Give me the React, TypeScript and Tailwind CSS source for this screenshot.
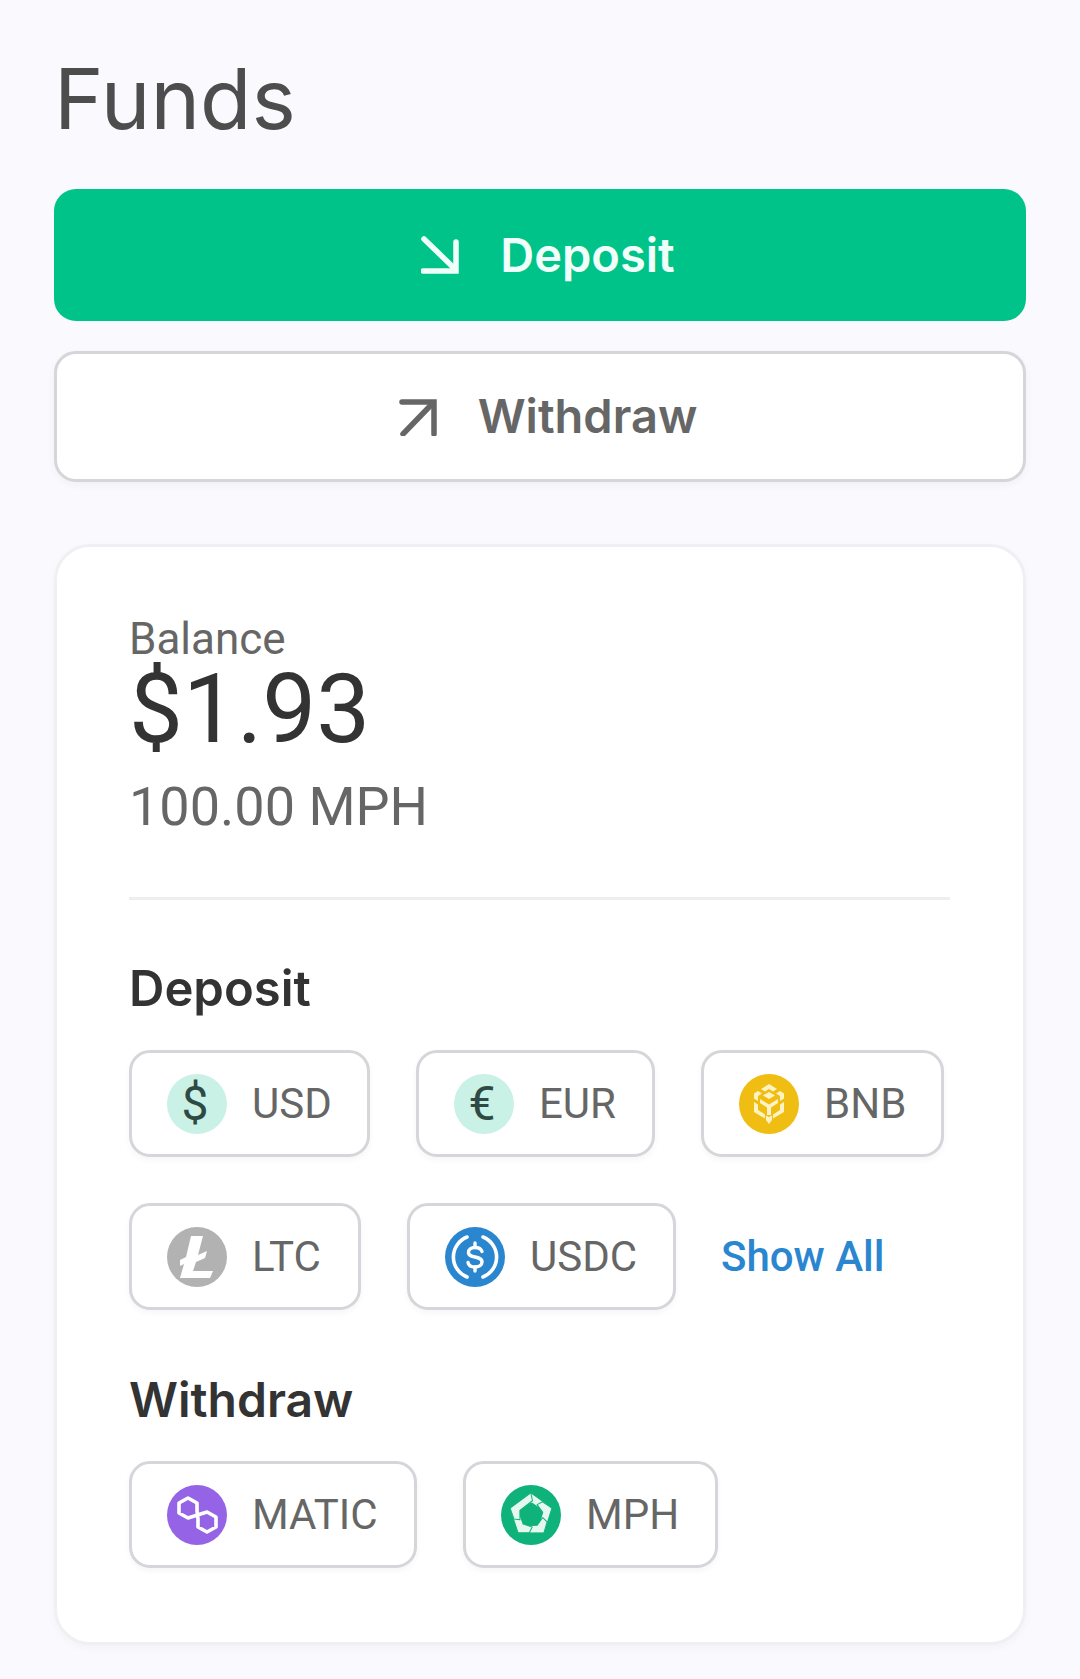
import type { ReactNode } from "react"

function ArrowDownRight() {
  return (
    <svg width="38" height="38" viewBox="0 0 38 38" fill="none" stroke="currentColor" strokeWidth="5.5">
      <path d="M3 3 L34 33" strokeLinecap="round" />
      <path d="M35 6 V35 H2" strokeLinecap="round" />
    </svg>
  )
}

function ArrowUpRight() {
  return (
    <svg width="38" height="38" viewBox="0 0 38 38" fill="none" stroke="currentColor" strokeWidth="5.5">
      <path d="M3 4 H35 V36" strokeLinecap="round" />
      <path d="M33 6 L4 36" strokeLinecap="round" />
    </svg>
  )
}

function CoinDisc({ className, children }: { className: string; children: ReactNode }) {
  return (
    <span className={`flex h-[60px] w-[60px] shrink-0 items-center justify-center rounded-full ${className}`}>
      {children}
    </span>
  )
}

function BnbIcon() {
  return (
    <svg width="60" height="60" viewBox="0 0 60 60" fill="#fff3c4">
      <path d="M30 10 L38 15 L34 17.5 L30 15 L26 17.5 L22 15 Z" />
      <path d="M19 17 L23 19.5 L19 22 V27 L15 24.5 V19.5 Z" />
      <path d="M41 17 L37 19.5 L41 22 V27 L45 24.5 V19.5 Z" />
      <path d="M30 18 L36 21.5 L30 25 L24 21.5 Z" />
      <path d="M21 25 L30 30.5 L39 25 V29 L32 33.5 V41 L28 41 V33.5 L21 29 Z" />
      <path d="M15 28 L19 30.5 V36 L26 40.5 V44.5 L15 38 Z" />
      <path d="M45 28 L41 30.5 V36 L34 40.5 V44.5 L45 38 Z" />
      <path d="M30 43 L33 41.5 V46 L30 50 L27 46 V41.5 Z" />
    </svg>
  )
}

function LtcIcon() {
  return (
    <svg width="34" height="44" viewBox="0 0 34 44">
      <path d="M11 1 H23 L18 20 L27 16 L25 23 L16 27 L13 36 H33 L30 43 H0 L4 29 L-2 32 L0 25 L6 22 Z" fill="#fff" />
    </svg>
  )
}

function UsdcIcon() {
  return (
    <svg width="50" height="50" viewBox="0 0 50 50" fill="none" stroke="#fff" strokeWidth="3.6" strokeLinecap="round">
      <path d="M17 5 A21.5 21.5 0 0 0 17 45" />
      <path d="M33 5 A21.5 21.5 0 0 1 33 45" />
      <path d="M32 19.5 C31 16.5 28.5 15.5 25 15.5 C21 15.5 18.5 17.5 18.5 20.5 C18.5 27 32 23 32 30 C32 33 29 35 25 35 C21 35 18.5 33.5 18 30.5" strokeWidth="3.4" />
      <path d="M25 11 V15 M25 35 V39" strokeWidth="3.4" />
    </svg>
  )
}

function MaticIcon() {
  return (
    <svg width="60" height="60" viewBox="0 0 60 60" fill="none" stroke="#fff" strokeWidth="3.6" strokeLinejoin="round">
      <path d="M21 33 L12 28 V18 L21 13 L30 18 V26 L31 34 V42 L40 47 L49 42 V32 L40 27 L21 33 Z" />
    </svg>
  )
}

function MphIcon() {
  return (
    <svg width="60" height="60" viewBox="0 0 60 60">
      {[0, 72, 144, 216, 288].map((angle) => (
        <g key={angle} transform={`rotate(${angle} 30 30)`}>
          <path d="M30 8 L51 23 L44 27 L31 18 L22 21 L21 15 Z" fill="#e4f8ef" stroke="#10b27c" strokeWidth="1" strokeLinejoin="round" />
        </g>
      ))}
    </svg>
  )
}

function Chip({ label, icon, width }: { label: string; icon: ReactNode; width: string }) {
  return (
    <div className={`flex h-[107px] items-center gap-[25px] rounded-[21px] border-[3px] border-[#d5d5da] bg-white pl-[35px] shadow-[0_3px_6px_rgba(0,0,0,0.04)] ${width}`}>
      {icon}
      <span className="text-[42px] leading-none text-[#666666]">{label}</span>
    </div>
  )
}

export default function App() {
  return (
    <div className="min-h-[1679px] bg-[#f9f9fe] px-[54px] pt-[46px] font-['Roboto',sans-serif]">
      <h1 className="font-['Inter',sans-serif] text-[84px] leading-[105px] text-[#4d4d4d]">Funds</h1>

      <div className="mt-[38px] flex h-[132px] items-center justify-center gap-[41px] rounded-[22px] bg-[#00c389] pl-[16px] font-['Inter',sans-serif] text-[47px] font-semibold text-[#f0fff9]">
        <ArrowDownRight />
        <span>Deposit</span>
      </div>

      <div className="mt-[30px] flex h-[131px] items-center justify-center gap-[41px] rounded-[22px] border-[3px] border-[#d5d5da] bg-white pl-[16px] font-['Inter',sans-serif] text-[47px] font-semibold text-[#666666] shadow-[0_3px_8px_rgba(0,0,0,0.04)]">
        <ArrowUpRight />
        <span>Withdraw</span>
      </div>

      <section className="mt-[62px] h-[1101px] rounded-[36px] border-[3px] border-[#f0f0f4] bg-white px-[72px] pt-[70px] shadow-[0_3px_8px_rgba(0,0,0,0.03)]">
        <p className="text-[44px] leading-[44px] text-[#666666]">Balance</p>
        <p className="text-[96px] leading-[97px] text-[#333333]">$1.93</p>
        <p className="mt-[19px] text-[54px] leading-[60px] text-[#666666]">100.00 MPH</p>

        <div className="mt-[60px] h-[3px] w-[821px] bg-[#eeeeee]" />

        <h2 className="mt-[61px] font-['Inter',sans-serif] text-[49px] font-semibold leading-[56px] text-[#333333]">Deposit</h2>
        <div className="mt-[33px] flex flex-wrap gap-[46px]">
          <Chip
            width="w-[241px]"
            label="USD"
            icon={
              <CoinDisc className="bg-[#c9f1e5] pr-[4px] text-[48px] text-[#2f4a45]">$</CoinDisc>
            }
          />
          <Chip
            width="w-[239px]"
            label="EUR"
            icon={
              <CoinDisc className="bg-[#c9f1e5] pr-[4px] text-[48px] text-[#2f4a45]">€</CoinDisc>
            }
          />
          <Chip
            width="w-[243px]"
            label="BNB"
            icon={
              <CoinDisc className="bg-[#f0bd13]">
                <BnbIcon />
              </CoinDisc>
            }
          />
          <Chip
            width="w-[232px]"
            label="LTC"
            icon={
              <CoinDisc className="bg-[#b2b2b2]">
                <LtcIcon />
              </CoinDisc>
            }
          />
          <Chip
            width="w-[269px]"
            label="USDC"
            icon={
              <CoinDisc className="bg-[#2b86d0]">
                <UsdcIcon />
              </CoinDisc>
            }
          />
          <a className="ml-[-1px] flex h-[107px] items-center text-[42px] font-medium text-[#2b86d0]">Show All</a>
        </div>

        <h2 className="mt-[62px] font-['Inter',sans-serif] text-[48px] font-semibold leading-[56px] text-[#333333]">Withdraw</h2>
        <div className="mt-[33px] flex gap-[46px]">
          <Chip
            width="w-[288px]"
            label="MATIC"
            icon={
              <CoinDisc className="bg-[#9564e6]">
                <MaticIcon />
              </CoinDisc>
            }
          />
          <Chip
            width="w-[255px]"
            label="MPH"
            icon={
              <CoinDisc className="bg-[#10b27c]">
                <MphIcon />
              </CoinDisc>
            }
          />
        </div>
      </section>
    </div>
  )
}
